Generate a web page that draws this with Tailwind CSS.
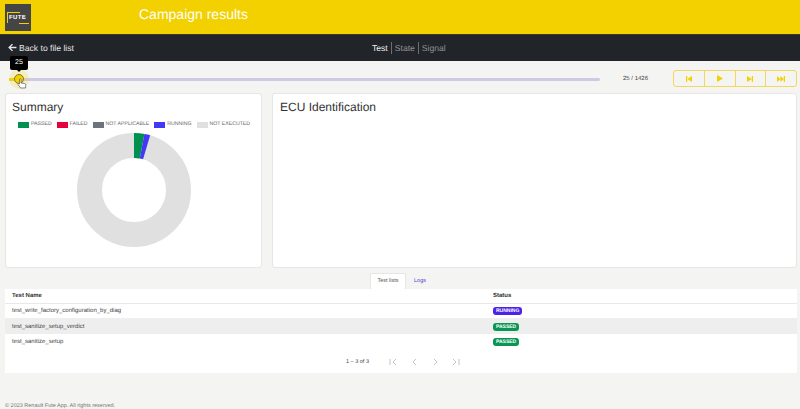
<!DOCTYPE html>
<html lang="en">
<head>
<meta charset="utf-8">
<title>Campaign results</title>
<script src="https://cdn.jsdelivr.net/npm/@tailwindcss/browser@4"></script>
</head>
<body class="h-[409px] overflow-hidden bg-[#f4f4f2] font-['Liberation_Sans',sans-serif] text-[#333] [text-rendering:geometricPrecision]">
    <header class="flex h-[34px] items-center bg-[#f3d000] pl-[5px]">
        <div class="relative h-[27px] w-[26px] bg-[#454545]">
            <div class="absolute left-[2px] top-[8px] h-[1px] w-[13px] bg-[#f3d000]"></div>
            <div class="absolute left-[2px] top-[8px] h-[11px] w-[1px] bg-[#f3d000]"></div>
            <span class="absolute left-[4px] top-[11px] text-[6px] leading-[7px] font-bold tracking-[0.4px] text-white">FUTE</span>
            <div class="absolute left-[14px] top-[19px] h-[1px] w-[10px] bg-[#f3d000]"></div>
        </div>
        <h1 class="mb-[5px] ml-[108px] text-[14px] text-white">Campaign results</h1>
    </header>

    <nav class="relative flex h-[27px] items-center border-t border-[#3a3a2a] bg-[#212529] pl-[8px] text-[8.600px]">
        <a class="flex items-center gap-[2px] text-[#e4e4e4]">
            <svg class="h-[9px] w-[9px]" viewBox="0 0 16 16" fill="none" stroke="currentColor" stroke-width="2.4"><path d="M15 8H2M8 2 2 8l6 6"/></svg>
            Back to file list
        </a>
        <div class="absolute left-[372px] top-0 flex h-full items-center text-[#8f9296]">
            <span class="pr-[3px] text-[#eeeeee]">Test</span>
            <span class="border-l border-[#6c7074] px-[3px]">State</span>
            <span class="border-l border-[#6c7074] pl-[3px]">Signal</span>
        </div>
    </nav>

    <section class="flex h-[32px] items-center pl-[9px]">
        <div class="relative mt-[5px] h-[3px] w-[591px] rounded-full bg-[#cfc8e6]">
            <div class="h-full w-[10px] rounded-l-full bg-[#f3d000]"></div>
            <div class="absolute left-[0px] top-[-9px] h-[20px] w-[20px] rounded-full bg-[#f3d000]/20"></div>
            <div class="absolute left-[5px] top-[-4px] h-[10px] w-[10px] rounded-full border border-[#8a7a10] bg-[#f3d000]"></div>
            <div class="absolute left-[1px] top-[-22px] flex h-[14px] w-[18px] items-center justify-center rounded-[2px] bg-black text-[7px] text-white">25</div>
            <div class="absolute left-[8px] top-[-8px] h-0 w-0 border-x-[2px] border-t-[2px] border-x-transparent border-t-black"></div>
            <svg class="absolute left-[8px] top-[0px] h-[11px] w-[10px]" viewBox="0 0 10 11" fill="#fff" stroke="#555" stroke-width="0.7"><path d="M2.5 1.5c0-1 1.500-1 1.500 0V5l3.500.5c1 .2 1.500.8 1.300 2L8.500 10H3.500L1 6.500c-.5-.8.500-1.500 1.500-.7z"/></svg>
        </div>
        <span class="ml-[23px] mt-[4px] w-[50px] text-[6px] text-[#444]">25 / 1426</span>
        <div class="mt-[3px] flex h-[17px] w-[124px] rounded-[3px] border border-[#f3d65a]">
            <button class="flex flex-1 items-center justify-center">
                <svg class="h-[6px] w-[6px]" viewBox="0 0 6 6" fill="#f3d000"><path d="M0 0h1.200v6H0zM6 0v6L1.200 3z"/></svg>
            </button>
            <button class="flex flex-1 items-center justify-center border-l border-[#f3d65a]">
                <svg class="h-[7px] w-[6px]" viewBox="0 0 6 7" fill="#f3d000"><path d="M0 0l6 3.500L0 7z"/></svg>
            </button>
            <button class="flex flex-1 items-center justify-center border-l border-[#f3d65a]">
                <svg class="h-[6px] w-[6px]" viewBox="0 0 6 6" fill="#f3d000"><path d="M0 0v6l4.800-3zM4.800 0H6v6H4.800z"/></svg>
            </button>
            <button class="flex flex-1 items-center justify-center border-l border-[#f3d65a]">
                <svg class="h-[6px] w-[8px]" viewBox="0 0 8 6" fill="#f3d000"><path d="M0 0v6l3.400-3zM3.400 0v6l3.400-3zM6.800 0H8v6H6.800z"/></svg>
            </button>
        </div>
    </section>

    <section class="flex gap-[10px] pl-[5px] pr-[3px]">
        <div class="h-[175px] w-[257px] rounded-[3px] border border-[#e6e6e6] bg-white pl-[6px] pt-[5px]">
            <h2 class="text-[12px] leading-[16px]">Summary</h2>
            <div class="mt-[6px] flex h-[8px] items-center pl-[6px] text-[5.200px] whitespace-nowrap text-[#666]">
                <i class="h-[6px] w-[11px] bg-[#00904f]"></i><span class="ml-[2px] mr-[5px]">PASSED</span>
                <i class="h-[6px] w-[11px] bg-[#e8003c]"></i><span class="ml-[2px] mr-[5px]">FAILED</span>
                <i class="h-[6px] w-[11px] bg-[#6c757d]"></i><span class="ml-[2px] mr-[5px]">NOT APPLICABLE</span>
                <i class="h-[6px] w-[11px] bg-[#4338f5]"></i><span class="ml-[2px] mr-[5px]">RUNNING</span>
                <i class="h-[6px] w-[11px] bg-[#e0e0e0]"></i><span class="ml-[2px]">NOT EXECUTED</span>
            </div>
            <svg class="mt-[3px] ml-[64px] h-[116px] w-[116px]" viewBox="0 0 116 116" fill="none">
                <circle cx="58" cy="58" r="44.500" stroke="#e0e0e0" stroke-width="25"/>
                <path d="M58 13.500A44.500 44.500 0 0 1 66.100 14.240" stroke="#00904f" stroke-width="25"/>
                <path d="M66.100 14.240A44.500 44.500 0 0 1 70.600 15.320" stroke="#4338f5" stroke-width="25"/>
            </svg>
        </div>
        <div class="h-[175px] flex-1 rounded-[3px] border border-[#e6e6e6] bg-white px-[7px] pt-[5px]">
            <h2 class="text-[12px] leading-[16px]">ECU Identification</h2>
        </div>
    </section>

    <div class="mt-[5px] flex h-[16px] justify-center pl-[4px] text-[5.500px]">
        <span class="flex w-[36px] items-center justify-center rounded-t-[2px] border-x border-t border-[#e6e6e6] bg-white text-[#555]">Test lists</span>
        <span class="flex w-[28px] items-center justify-center text-[#4b3fd0]">Logs</span>
    </div>

    <section class="mx-[3px] ml-[5px] h-[84px] bg-white text-[6px]">
        <table class="w-full border-collapse text-left">
            <thead>
                <tr class="h-[14px] border-b border-[#e8e8e8]">
                    <th class="w-[488px] pl-[7px] pt-[2px] font-bold">Test Name</th>
                    <th class="pt-[2px] font-bold">Status</th>
                </tr>
            </thead>
            <tbody class="text-[#444]">
                <tr class="h-[15px]">
                    <td class="pl-[7px] pt-[2px]">test_write_factory_configuration_by_diag</td>
                    <td class="pt-[2px]"><span class="inline-block rounded-[3px] bg-[#4a22e8] px-[3px] text-[5px] leading-[8px] font-bold text-white">RUNNING</span></td>
                </tr>
                <tr class="h-[16px] bg-[#eeeeee]">
                    <td class="pl-[7px] pt-[2px]">test_sanitize_setup_verdict</td>
                    <td class="pt-[2px]"><span class="inline-block rounded-[3px] bg-[#0a9552] px-[3px] text-[5px] leading-[8px] font-bold text-white">PASSED</span></td>
                </tr>
                <tr class="h-[15px]">
                    <td class="pl-[7px] pt-[2px]">test_sanitize_setup</td>
                    <td class="pt-[2px]"><span class="inline-block rounded-[3px] bg-[#0a9552] px-[3px] text-[5px] leading-[8px] font-bold text-white">PASSED</span></td>
                </tr>
            </tbody>
        </table>
        <div class="flex h-[24px] items-center pl-[341px] pt-[2px] text-[5.500px] text-[#444]">
            <span class="w-[43px]">1 – 3 of 3</span>
            <div class="flex gap-[13px] text-[#c4c4c4]">
                <svg class="h-[8px] w-[8px]" viewBox="0 0 8 8" fill="none" stroke="currentColor"><path d="M1 1v6M7 1 4 4l3 3"/></svg>
                <svg class="h-[8px] w-[8px]" viewBox="0 0 8 8" fill="none" stroke="currentColor"><path d="M6 1 3 4l3 3"/></svg>
                <svg class="h-[8px] w-[8px]" viewBox="0 0 8 8" fill="none" stroke="currentColor"><path d="M3 1l3 3-3 3"/></svg>
                <svg class="h-[8px] w-[8px]" viewBox="0 0 8 8" fill="none" stroke="currentColor"><path d="M1 1l3 3-3 3M7 1v6"/></svg>
            </div>
        </div>
    </section>

    <footer class="mt-[29px] pl-[5px] text-[5.500px] leading-[8px] text-[#777]">© 2023 Renault Fute App. All rights reserved.</footer>
</body>
</html>
